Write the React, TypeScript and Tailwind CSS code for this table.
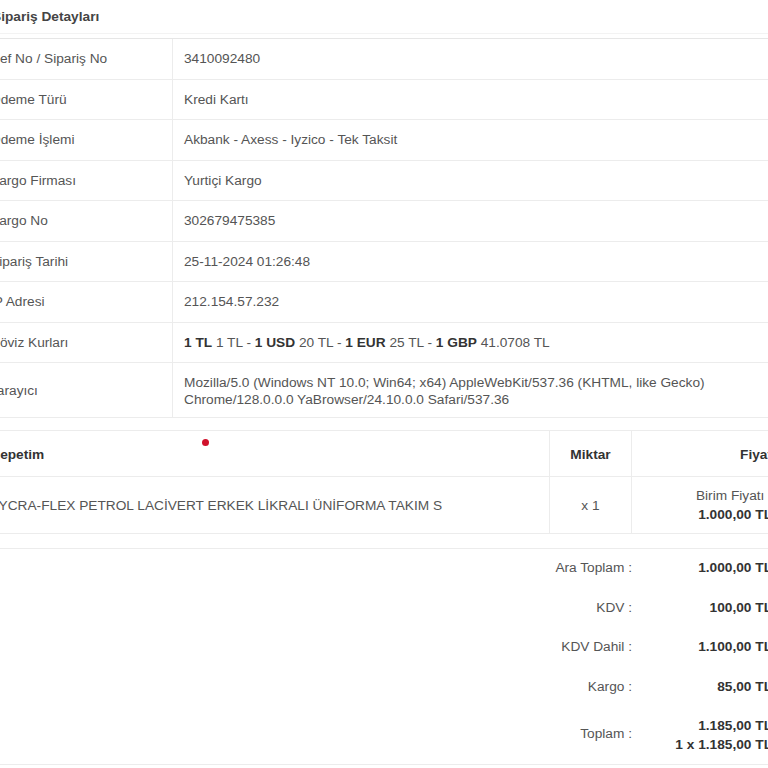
import React from "react";

const details: { label: string; value: React.ReactNode }[] = [
  { label: "Ref No / Sipariş No", value: "3410092480" },
  { label: "Ödeme Türü", value: "Kredi Kartı" },
  { label: "Ödeme İşlemi", value: "Akbank - Axess - Iyzico - Tek Taksit" },
  { label: "Kargo Firması", value: "Yurtiçi Kargo" },
  { label: "Kargo No", value: "302679475385" },
  { label: "Sipariş Tarihi", value: "25-11-2024 01:26:48" },
  { label: "IP Adresi", value: "212.154.57.232" },
  {
    label: "Döviz Kurları",
    value: (
      <span className="whitespace-pre">
        <b className="text-[#333]">1 TL</b>{" 1 TL - "}
        <b className="text-[#333]">1 USD</b>{" 20 TL - "}
        <b className="text-[#333]">1 EUR</b>{" 25 TL - "}
        <b className="text-[#333]">1 GBP</b>{" 41.0708 TL"}
      </span>
    ),
  },
];

const totals = [
  { label: "Ara Toplam :", value: "1.000,00 TL" },
  { label: "KDV :", value: "100,00 TL" },
  { label: "KDV Dahil :", value: "1.100,00 TL" },
  { label: "Kargo :", value: "85,00 TL" },
];

export default function App() {
  return (
    <div className="w-[768px] h-[768px] overflow-hidden bg-white text-[#555] text-[13.7px] font-['Liberation_Sans',Arial,sans-serif]">
      <div className="-ml-[20px] w-[800px]">
        <div className="h-[34px] pl-[12px] pt-[1px] flex items-center font-bold text-[#444] border-b border-[#f3f3f3]">
          Sipariş Detayları
        </div>

        <div className="mt-[4px] border-t border-[#e6e6e6]">
          {details.map((row) => (
            <div key={row.label} className="flex h-[40.5px] pt-[2px] border-b border-[#ececec]">
              <div className="w-[193px] pl-[10px] flex items-center border-r border-[#ececec] -mt-[2px] pt-[2px]">{row.label}</div>
              <div className="flex-1 pl-[11px] flex items-center">{row.value}</div>
            </div>
          ))}
          <div className="flex h-[55px] pt-[2px] border-b border-[#ececec]">
            <div className="w-[193px] pl-[10px] flex items-center border-r border-[#ececec] -mt-[2px] pt-[2px]">Tarayıcı</div>
            <div className="flex-1 pl-[11px] flex items-center leading-[17px]">
              Mozilla/5.0 (Windows NT 10.0; Win64; x64) AppleWebKit/537.36 (KHTML, like Gecko)
              <br />
              Chrome/128.0.0.0 YaBrowser/24.10.0.0 Safari/537.36
            </div>
          </div>
        </div>

        <div className="mt-[12px] border-t border-[#ececec]">
          <div className="relative grid grid-cols-[570px_82px_1fr] h-[46px] border-b border-[#ececec] font-bold text-[#333]">
            <div className="pl-[11px] pt-[3px] flex items-center border-r border-[#ececec]">Sepetim</div>
            <div className="pt-[3px] flex items-center justify-center border-r border-[#ececec]">Miktar</div>
            <div className="pr-[8px] pt-[3px] flex items-center justify-end">Fiyat</div>
            <span className="absolute left-[222px] top-[8px] w-[7px] h-[7px] rounded-full bg-[#d0112b]" />
          </div>
          <div className="grid grid-cols-[570px_82px_1fr] h-[57px] border-b border-[#ececec]">
            <div className="pl-[12px] pt-[2px] flex items-center border-r border-[#ececec]">
              LYCRA-FLEX PETROL LACİVERT ERKEK LİKRALI ÜNİFORMA TAKIM S
            </div>
            <div className="pt-[2px] flex items-center justify-center border-r border-[#ececec]">x 1</div>
            <div className="pr-[8px] flex flex-col items-end justify-center leading-[19px]">
              <span>Birim Fiyatı :</span>
              <b className="text-[#333]">1.000,00 TL</b>
            </div>
          </div>
        </div>

        <div className="mt-[14px] border-t border-b border-[#ececec] pb-[2px]">
          {totals.map((t) => (
            <div key={t.label} className="flex h-[39.5px] items-center">
              <div className="w-[660px] pr-[8px] text-right">{t.label}</div>
              <div className="flex-1 pr-[8px] text-right font-bold text-[#333]">{t.value}</div>
            </div>
          ))}
          <div className="flex h-[55px] items-center">
            <div className="w-[660px] pr-[8px] text-right">Toplam :</div>
            <div className="flex-1 pr-[8px] flex flex-col items-end font-bold text-[#333] leading-[19px]">
              <span>1.185,00 TL</span>
              <span>1 x 1.185,00 TL</span>
            </div>
          </div>
        </div>
      </div>
    </div>
  );
}
